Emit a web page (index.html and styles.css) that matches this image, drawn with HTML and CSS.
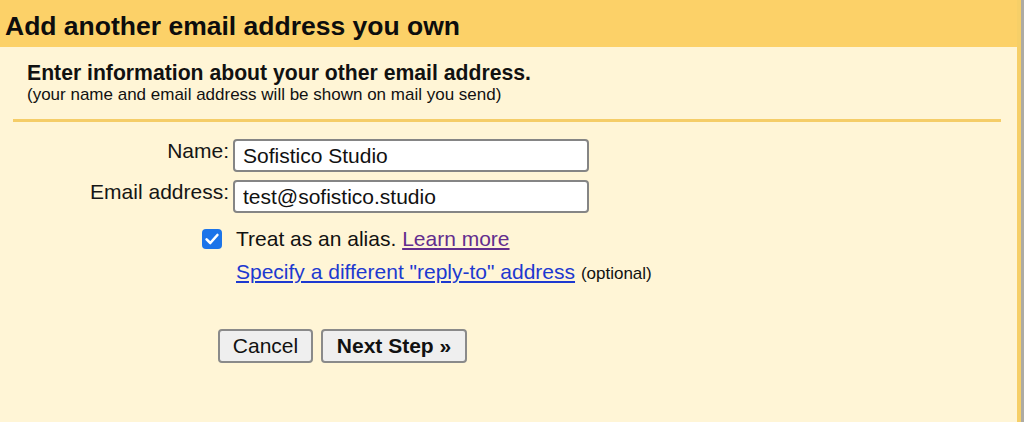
FILE: index.html
```html
<!DOCTYPE html>
<html>
<head>
<meta charset="utf-8">
<link rel="stylesheet" href="styles.css">
</head>
<body>
<div class="page">
  <div class="header">Add another email address you own</div>
  <div class="content">
    <div class="intro">
      <div class="title">Enter information about your other email address.</div>
      <div class="note">(your name and email address will be shown on mail you send)</div>
    </div>
    <div class="divider"></div>
    <div class="form">
      <label class="label">Name:</label>
      <input class="field" type="text" value="Sofistico Studio">
      <label class="label">Email address:</label>
      <input class="field" type="text" value="test@sofistico.studio">
      <div class="check-cell">
        <span class="checkbox"><svg viewBox="0 0 20 20" width="20" height="20"><path d="M4.6 10.4 L8.3 14 L15.4 6" fill="none" stroke="#fff" stroke-width="2.6" stroke-linecap="round" stroke-linejoin="round"/></svg></span>
      </div>
      <div class="text-cell">Treat as an alias. <a class="visited" href="#">Learn more</a></div>
      <div></div>
      <div class="text-cell link-row"><a class="link" href="#">Specify a different "reply-to" address</a> <span class="optional">(optional)</span></div>
    </div>
    <div class="buttons">
      <button class="btn cancel">Cancel</button>
      <button class="btn next">Next Step »</button>
    </div>
  </div>
</div>
</body>
</html>
```

FILE: styles.css
```css
html, body {
  margin: 0;
  padding: 0;
  height: 100%;
}
body {
  background: #aeaba3;
  font-family: "Liberation Sans", Arial, sans-serif;
  color: #111;
  overflow: hidden;
}
.page {
  width: 1017px;
  height: 100%;
  border-right: 4px solid #f6cf68;
  background: #fff5d6;
}
.header {
  background: #fcd168;
  height: 47px;
  box-sizing: border-box;
  padding: 5px 0 0 5px;
  font-size: 26.5px;
  line-height: 42px;
  font-weight: bold;
  color: #0d0d0d;
}
.content {
  padding: 14px 16px 0 13px;
}
.intro {
  padding-left: 14px;
}
.title {
  font-size: 21.2px;
  line-height: 24px;
  font-weight: bold;
}
.note {
  font-size: 17px;
  line-height: 20px;
}
.divider {
  margin-top: 14px;
  height: 3px;
  background: #f5cd68;
}
.form {
  margin-top: 17px;
  margin-left: -13px;
  display: grid;
  grid-template-columns: 229px 356px;
  column-gap: 4px;
  row-gap: 8px;
  font-size: 21px;
  line-height: 24px;
}
.label {
  text-align: right;
  align-self: start;
  color: #151515;
}
.field {
  box-sizing: border-box;
  width: 356px;
  height: 33px;
  margin: 0;
  padding: 0 8px;
  border: 2px solid #858585;
  border-radius: 4px;
  background: #fff;
  font-family: "Liberation Sans", Arial, sans-serif;
  font-size: 21px;
  color: #111;
  outline: none;
}
.check-cell {
  margin-top: 6px;
  display: flex;
  justify-content: flex-end;
  align-items: center;
  padding-right: 7px;
}
.checkbox {
  width: 20px;
  height: 20px;
  border-radius: 4px;
  background: #1c74e9;
  display: flex;
}
.text-cell {
  margin-top: 6px;
  padding-left: 3px;
  white-space: nowrap;
}
.link-row {
  margin-top: 1px;
}
.visited {
  color: #632d8e;
  text-decoration: underline;
}
.link {
  color: #1d39d0;
  text-decoration: underline;
}
.optional {
  font-size: 17px;
}
.buttons {
  margin-top: 43px;
  padding-left: 205px;
  display: flex;
  gap: 8px;
}
.btn {
  box-sizing: border-box;
  height: 34px;
  margin: 0;
  padding: 0;
  border: 2px solid #8a8a8a;
  border-radius: 4px;
  background: #efefef;
  font-family: "Liberation Sans", Arial, sans-serif;
  font-size: 21px;
  color: #111;
}
.cancel {
  width: 95px;
}
.next {
  width: 146px;
  font-weight: bold;
}
```
